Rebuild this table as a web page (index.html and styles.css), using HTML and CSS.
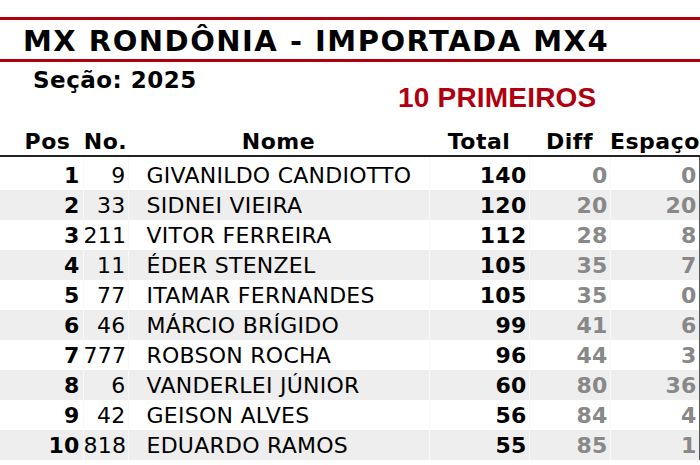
FILE: index.html
```html
<!DOCTYPE html>
<html lang="pt">
<head>
<meta charset="utf-8">
<title>MX Rondônia - Importada MX4</title>
<link rel="stylesheet" href="styles.css">
</head>
<body>
<header class="title">
  <h1>MX RONDÔNIA - IMPORTADA MX4</h1>
</header>
<div class="sub">
  <div class="season">Seção: 2025</div>
  <div class="top10">10 PRIMEIROS</div>
</div>
<table class="standings">
  <colgroup>
    <col class="c-pos"><col class="c-no"><col class="c-name"><col class="c-total"><col class="c-diff"><col class="c-gap">
  </colgroup>
  <thead>
    <tr><th class="h-pos">Pos</th><th>No.</th><th>Nome</th><th>Total</th><th>Diff</th><th class="h-gap">Espaço</th></tr>
  </thead>
  <tbody>
    <tr><td class="pos">1</td><td class="no">9</td><td class="name">GIVANILDO CANDIOTTO</td><td class="total">140</td><td class="diff">0</td><td class="gap">0</td></tr>
    <tr><td class="pos">2</td><td class="no">33</td><td class="name">SIDNEI VIEIRA</td><td class="total">120</td><td class="diff">20</td><td class="gap">20</td></tr>
    <tr><td class="pos">3</td><td class="no">211</td><td class="name">VITOR FERREIRA</td><td class="total">112</td><td class="diff">28</td><td class="gap">8</td></tr>
    <tr><td class="pos">4</td><td class="no">11</td><td class="name">ÉDER STENZEL</td><td class="total">105</td><td class="diff">35</td><td class="gap">7</td></tr>
    <tr><td class="pos">5</td><td class="no">77</td><td class="name">ITAMAR FERNANDES</td><td class="total">105</td><td class="diff">35</td><td class="gap">0</td></tr>
    <tr><td class="pos">6</td><td class="no">46</td><td class="name">MÁRCIO BRÍGIDO</td><td class="total">99</td><td class="diff">41</td><td class="gap">6</td></tr>
    <tr><td class="pos">7</td><td class="no">777</td><td class="name">ROBSON ROCHA</td><td class="total">96</td><td class="diff">44</td><td class="gap">3</td></tr>
    <tr><td class="pos">8</td><td class="no">6</td><td class="name">VANDERLEI JÚNIOR</td><td class="total">60</td><td class="diff">80</td><td class="gap">36</td></tr>
    <tr><td class="pos">9</td><td class="no">42</td><td class="name">GEISON ALVES</td><td class="total">56</td><td class="diff">84</td><td class="gap">4</td></tr>
    <tr><td class="pos">10</td><td class="no">818</td><td class="name">EDUARDO RAMOS</td><td class="total">55</td><td class="diff">85</td><td class="gap">1</td></tr>
  </tbody>
</table>
</body>
</html>
```
FILE: styles.css
```css
html, body {
  margin: 0;
  padding: 0;
  background: #fff;
}
body {
  font-family: "DejaVu Sans", Verdana, sans-serif;
  color: #000;
  width: 700px;
  overflow: hidden;
}
.title {
  margin-top: 17px;
  border-top: 3px solid #b00010;
  border-bottom: 3px solid #b00010;
  height: 39px;
}
.title h1 {
  margin: 0;
  padding: 4px 0 0 23px;
  font-size: 29px;
  letter-spacing: 1.5px;
  line-height: 35px;
  font-weight: bold;
}
.sub {
  height: 63px;
}
.season {
  padding: 5px 0 0 33px;
  font-size: 23px;
  letter-spacing: 0.5px;
  font-weight: bold;
  line-height: 26px;
}
.top10 {
  padding-left: 398px;
  margin-top: -10px;
  font-family: "Liberation Sans", Arial, sans-serif;
  font-size: 28px;
  letter-spacing: 0.2px;
  font-weight: bold;
  color: #b00010;
  line-height: 30px;
}
.standings {
  border-collapse: collapse;
  width: 699px;
  table-layout: fixed;
}
.c-pos { width: 83px; }
.c-no { width: 45px; }
.c-name { width: 301px; }
.c-total { width: 100px; }
.c-diff { width: 81px; }
.c-gap { width: 89px; }
.standings th {
  font-size: 22px;
  letter-spacing: 0.5px;
  font-weight: bold;
  line-height: 26px;
  padding: 4px 0 0;
  text-align: center;
  vertical-align: top;
  border-bottom: 2px solid #222;
}
.standings th.h-pos { padding-left: 12px; }
.standings th.h-gap { text-align: right; padding-right: 2px; }
.standings td {
  font-size: 22px;
  letter-spacing: 0.25px;
  line-height: 29px;
  padding: 1px 0 0;
  vertical-align: top;
  border-left: 1px solid #f8f8f8;
  white-space: nowrap;
}
.standings tbody tr:first-child td { padding-top: 4px; }
.standings td:first-child { border-left: 0; }
.standings td:last-child { border-right: 1px solid #555; }
.standings tbody tr:nth-child(even) td { background: #eeeeee; }
.standings td.pos { text-align: right; font-weight: bold; padding-right: 3px; }
.standings td.no { text-align: right; padding-right: 2px; }
.standings td.name { padding-left: 18px; }
.standings td.total { text-align: right; font-weight: bold; padding-right: 2px; }
.standings td.diff { text-align: right; font-weight: bold; color: #888; padding-right: 2px; }
.standings td.gap { text-align: right; font-weight: bold; color: #888; padding-right: 2px; }
```
